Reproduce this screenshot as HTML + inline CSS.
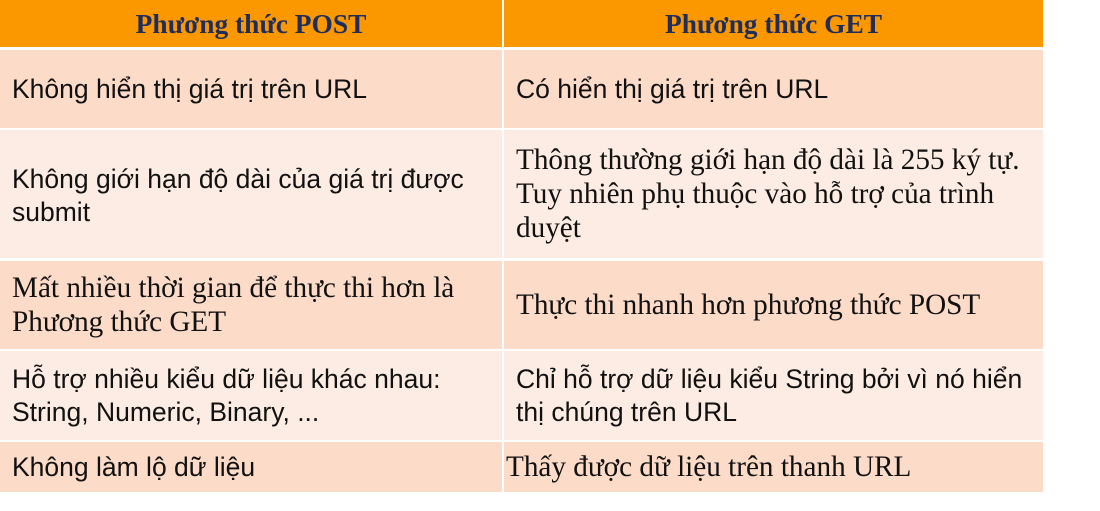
<!DOCTYPE html>
<html><head><meta charset="utf-8"><style>
body{margin:0;width:1100px;height:511px;background:#fff;position:relative;overflow:hidden}
.c{position:absolute;box-sizing:border-box;display:flex;align-items:center;color:#111;line-height:34px;white-space:nowrap}
.s{font-family:"Liberation Sans",sans-serif;font-size:26.5px;line-height:33px}
.r{font-family:"Liberation Serif",serif;font-size:29.2px;line-height:34px}
.h{background:#fb9800;color:#1f2d5c;font-family:"Liberation Serif",serif;font-weight:bold;font-size:27.4px;justify-content:center}
.d{background:#fcdcc9}.l{background:#fdece3}
.L{left:0;width:502px;padding-left:12px}
.R{left:504px;width:539px;padding-left:12px}
</style></head><body>
<div class="c h L" style="top:0;height:47px;padding:0">Phương thức POST</div>
<div class="c h R" style="top:0;height:47px;padding:0">Phương thức GET</div>

<div class="c d L s" style="top:50px;height:78px">Không hiển thị giá trị trên URL</div>
<div class="c d R s" style="top:50px;height:78px">Có hiển thị giá trị trên URL</div>

<div class="c l L s" style="top:130px;height:128px;padding-top:4px">Không giới hạn độ dài của giá trị được<br>submit</div>
<div class="c l R r" style="top:130px;height:128px">Thông thường giới hạn độ dài là 255 ký tự.<br>Tuy nhiên phụ thuộc vào hỗ trợ của trình<br>duyệt</div>

<div class="c d L r" style="top:261px;height:88px">Mất nhiều thời gian để thực thi hơn là<br>Phương thức GET</div>
<div class="c d R r" style="top:261px;height:88px">Thực thi nhanh hơn phương thức POST</div>

<div class="c l L s" style="top:351px;height:89px">Hỗ trợ nhiều kiểu dữ liệu khác nhau:<br>String, Numeric, Binary, ...</div>
<div class="c l R s" style="top:351px;height:89px">Chỉ hỗ trợ dữ liệu kiểu String bởi vì nó hiển<br>thị chúng trên URL</div>

<div class="c d L s" style="top:442px;height:50px">Không làm lộ dữ liệu</div>
<div class="c d R r" style="top:442px;height:50px;padding-left:2px">Thấy được dữ liệu trên thanh URL</div>
</body></html>
